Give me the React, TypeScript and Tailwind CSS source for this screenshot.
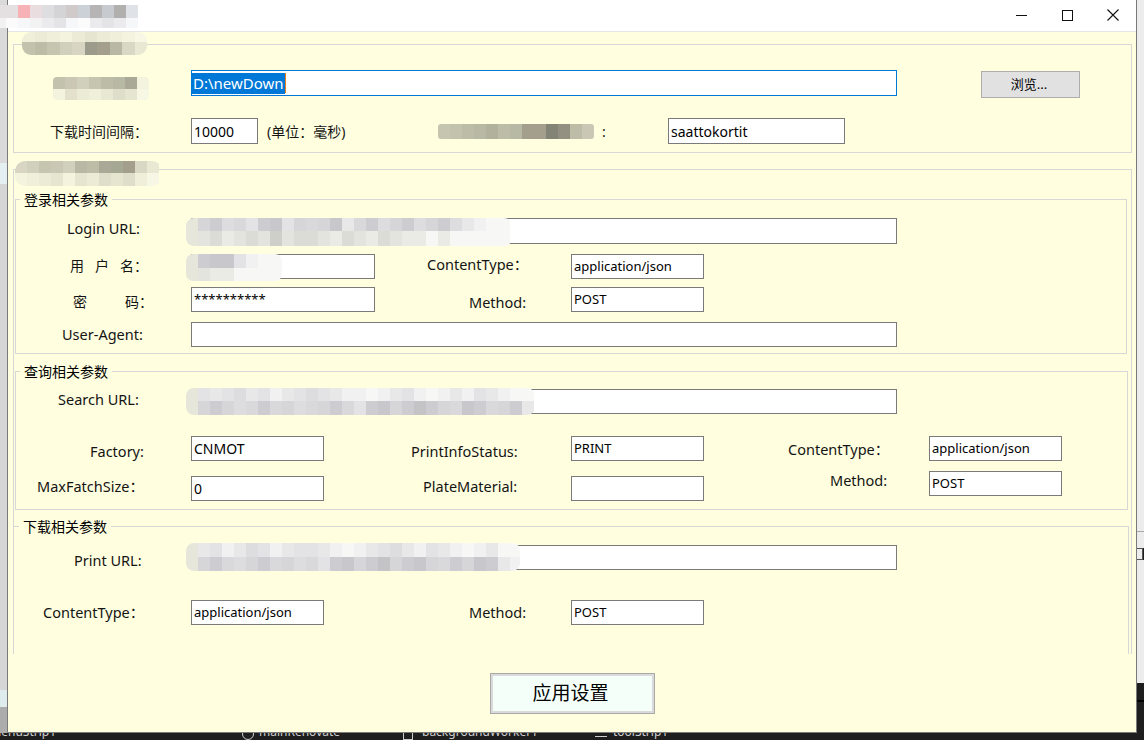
import React from 'react';

function cx(...a: Array<string | false | undefined | null>) {
  return a.filter(Boolean).join(' ');
}

const TB = [
  'bg-[#e4e0e2]', 'bg-[#f7b2b6]', 'bg-[#e9dde0]', 'bg-[#dedee1]', 'bg-[#d4d4d6]', 'bg-[#d0cacb]',
  'bg-[#ccd0d7]', 'bg-[#b6b4b4]', 'bg-[#c7cacf]', 'bg-[#b2afaf]', 'bg-[#dfe2e6]', 'bg-[#f2f2f3]',
  'bg-[#fbfbfb]', 'bg-[#ebebed]', 'bg-[#e4e4e6]', 'bg-[#f6f7f8]',
];

const BG = [
  'bg-[#c3c2ac]', 'bg-[#bdbda7]', 'bg-[#c5c5b0]', 'bg-[#d1d0bd]', 'bg-[#d9d5c3]', 'bg-[#9b9b8b]',
  'bg-[#a49e8c]', 'bg-[#b8b9a4]', 'bg-[#d8d8c4]', 'bg-[#e8e8d3]', 'bg-[#f0f0da]', 'bg-[#ececd6]',
  'bg-[#f3f3de]', 'bg-[#e6e6d0]', 'bg-[#cac8b4]', 'bg-[#aaa997]', 'bg-[#838376]', 'bg-[#939082]',
  'bg-[#b1b19c]', 'bg-[#dedecb]', 'bg-[#f7f7e5]', 'bg-[#e3e1cb]', 'bg-[#b4b4a0]', 'bg-[#a5a893]',
];

const GR = [
  'bg-[#d6d6d9]', 'bg-[#cdcdd1]', 'bg-[#dddddf]', 'bg-[#e3e3e5]', 'bg-[#c8c8cc]', 'bg-[#d9d9db]',
  'bg-[#e8e8e9]', 'bg-[#f1f1f1]', 'bg-[#e4e4df]', 'bg-[#dcdcd7]', 'bg-[#ebebe6]', 'bg-[#cfcfca]',
  'bg-[#f7f7f5]', 'bg-[#e6e6da]', 'bg-[#c4c4c6]', 'bg-[#d2d2cd]',
];

type MP = { pal: string[]; rows: number[][]; cell: string; rowH: string[]; className?: string };

function Mosaic({ pal, rows, cell, rowH, className }: MP) {
  return (
    <div className={cx('flex flex-col overflow-hidden blur-[0.5px]', className)}>
      {rows.map((r, i) => (
        <div key={i} className={cx('flex shrink-0', rowH[i])}>
          {r.map((c, j) => (
            <div key={j} className={cx('shrink-0 h-full', cell, pal[c])} />
          ))}
        </div>
      ))}
    </div>
  );
}

function Label({ className, children, size }: { className: string; children: React.ReactNode; size?: string }) {
  return (
    <div className={cx('shrink-0 flex items-center whitespace-nowrap text-[#141414]', size ?? 'text-[14.5px]', className)}>
      {children}
    </div>
  );
}

function Field({ className, children, text }: { className: string; children?: React.ReactNode; text?: string }) {
  return (
    <div
      className={cx(
        'shrink-0 bg-white border border-[#7a7a7a] flex items-center pl-[2px] whitespace-nowrap text-black overflow-hidden',
        text ?? 'text-[13px]',
        className,
      )}
    >
      {children}
    </div>
  );
}

function Group({ title, titleLeft, className, children }: { title?: string; titleLeft?: string; className: string; children: React.ReactNode }) {
  return (
    <div className={cx('relative shrink-0 border border-[#d7d7d7]', className)}>
      {title && (
        <span className={cx('absolute top-[-10px] px-[4px] bg-[#ffffe0] text-[14px] leading-[20px] text-black whitespace-nowrap', titleLeft ?? 'left-[4px]')}>
          {title}
        </span>
      )}
      {children}
    </div>
  );
}

function TitleBar() {
  return (
    <div className="h-[32px] shrink-0 bg-white border-b border-[#e6e6e6] flex justify-end">
      <div className="w-[46px] h-full flex items-center justify-center pb-[1px]">
        <svg width="11" height="11" viewBox="0 0 11 11" shapeRendering="crispEdges">
          <line x1="0" y1="5.5" x2="11" y2="5.5" stroke="#111" strokeWidth="1" />
        </svg>
      </div>
      <div className="w-[46px] h-full flex items-center justify-center pb-[1px]">
        <svg width="11" height="11" viewBox="0 0 11 11" shapeRendering="crispEdges">
          <rect x="0.5" y="0.5" width="10" height="10" fill="none" stroke="#111" strokeWidth="1" />
        </svg>
      </div>
      <div className="w-[46px] h-full flex items-center justify-center pb-[1px]">
        <svg width="12" height="12" viewBox="0 0 12 12">
          <path d="M0.5 0.5 L11.5 11.5 M11.5 0.5 L0.5 11.5" stroke="#111" strokeWidth="1.1" />
        </svg>
      </div>
    </div>
  );
}

function GroupOne() {
  return (
    <Group className="mt-[12px] h-[109px] w-full">
      <Mosaic
        pal={BG}
        cell="w-[12.5px]"
        rowH={['h-[10px]', 'h-[13px]']}
        rows={[
          [10, 11, 10, 12, 11, 13, 11, 10, 12, 20],
          [0, 1, 2, 3, 4, 5, 6, 7, 8, 9],
        ]}
        className="absolute left-[8px] top-[-13px] rounded-[9px]"
      />
      <div className="flex mt-[25px] h-[26px]">
        <div className="w-[177px] shrink-0">
          <Mosaic
            pal={BG}
            cell="w-[12px]"
            rowH={['h-[12px]', 'h-[11px]']}
            rows={[
              [0, 14, 3, 2, 1, 7, 15, 12],
              [12, 21, 11, 10, 9, 19, 13, 20],
            ]}
            className="ml-[39px] mt-[7px] w-[96px] rounded-[4px]"
          />
        </div>
        <div className="shrink-0 w-[706px] h-[26px] bg-white border border-[#0078d7] flex items-center pl-[0px]">
          <span className="bg-[#0078d7] text-white text-[15px] leading-[21px] pl-[1px] pr-[1px]">D:\newDown</span>
          <span className="w-[1px] h-[20px] bg-[#f07f1a]" />
        </div>
        <button className="shrink-0 ml-[84px] mt-[1px] w-[99px] h-[27px] bg-[#e1e1e1] border border-[#adadad] text-[13px] text-black flex items-center justify-center pr-[3px]">
          浏览...
        </button>
      </div>
      <div className="flex mt-[22px] h-[26px]">
        <Label className="w-[177px] pl-[36px]" size="text-[14px]">下载时间间隔：</Label>
        <Field className="w-[67px] h-[26px]" text="text-[14px]">10000</Field>
        <div className="shrink-0 w-[180px] pl-[9px] flex items-center text-[14px] text-[#141414] whitespace-nowrap">(单位：毫秒)</div>
        <div className="shrink-0 w-[160px] flex items-center">
          <Mosaic
            pal={BG}
            cell="w-[12px]"
            rowH={['h-[15px]']}
            rows={[[2, 0, 1, 7, 18, 1, 7, 6, 6, 16, 17, 1, 14]]}
            className="w-[156px] rounded-[3px]"
          />
        </div>
        <div className="shrink-0 w-[70px] pl-[4px] flex items-center text-[14px] text-[#141414]">:</div>
        <Field className="w-[177px] h-[26px]" text="text-[14px]">saattokortit</Field>
      </div>
    </Group>
  );
}

function LoginGroup() {
  return (
    <Group title="登录相关参数" className="ml-[1px] mt-[29px] w-[1112px] h-[155px]">
      <div className="relative flex mt-[18px] h-[26px]">
        <Label className="w-[175px] pl-[51px] pb-[4px]">Login URL:</Label>
        <Field className="w-[706px] h-[26px]" />
        <Mosaic
          pal={GR}
          cell="w-[12px]"
          rowH={['h-[13px]', 'h-[15px]']}
          rows={[
            [13, 0, 1, 2, 5, 3, 1, 4, 3, 0, 5, 0, 4, 6, 5, 1, 2, 0, 1, 2, 0, 1, 2, 6, 7, 12, 12],
            [13, 8, 9, 10, 8, 9, 8, 11, 8, 9, 9, 8, 10, 9, 8, 10, 9, 8, 10, 10, 12, 10, 12, 12, 12, 12, 12],
          ]}
          className="absolute left-[170px] top-[0px] w-[326px] rounded-[8px]"
        />
      </div>
      <div className="relative flex mt-[10px] h-[25px]">
        <Label className="w-[175px] pl-[54px] pb-[3px]" size="text-[14px]">
          <span className="tracking-[11px]">用户</span>
          <span>名：</span>
        </Label>
        <Field className="w-[184px] h-[25px]" />
        <Mosaic
          pal={GR}
          cell="w-[12px]"
          rowH={['h-[14px]', 'h-[13px]']}
          rows={[
            [13, 1, 4, 4, 3, 7, 12, 12],
            [13, 8, 10, 10, 12, 12, 12, 12],
          ]}
          className="absolute left-[170px] top-[0px] w-[96px] rounded-[7px]"
        />
        <Label className="w-[196px] pl-[52px] pb-[3px]">ContentType：</Label>
        <Field className="w-[133px] h-[25px]">application/json</Field>
      </div>
      <div className="flex mt-[8px] h-[25px]">
        <Label className="w-[175px] pl-[57px] pt-[4px]" size="text-[14px]">
          <span className="mr-[38px]">密</span>
          <span>码：</span>
        </Label>
        <Field className="w-[184px] h-[25px]">**********</Field>
        <Label className="w-[196px] pl-[94px] pt-[6px]">Method:</Label>
        <Field className="w-[133px] h-[25px]">POST</Field>
      </div>
      <div className="flex mt-[10px] h-[25px]">
        <Label className="w-[175px] pl-[46px]">User-Agent:</Label>
        <Field className="w-[706px] h-[25px]" />
      </div>
    </Group>
  );
}

function QueryGroup() {
  return (
    <Group title="查询相关参数" className="ml-[1px] mt-[17px] w-[1113px] h-[139px]">
      <div className="relative flex mt-[17px] h-[25px]">
        <Label className="w-[175px] pl-[42px] pb-[4px]">Search URL:</Label>
        <Field className="w-[706px] h-[25px]" />
        <Mosaic
          pal={GR}
          cell="w-[12px]"
          rowH={['h-[13px]', 'h-[14px]']}
          rows={[
            [13, 3, 6, 3, 2, 6, 3, 7, 6, 3, 2, 3, 6, 7, 7, 12, 7, 6, 3, 7, 12, 7, 6, 7, 3, 6, 7, 12, 12],
            [13, 0, 1, 0, 2, 5, 1, 5, 0, 2, 5, 0, 1, 5, 3, 1, 4, 0, 1, 14, 1, 0, 5, 4, 1, 5, 0, 1, 6],
          ]}
          className="absolute left-[170px] top-[-1px] w-[349px] rounded-[8px]"
        />
      </div>
      <div className="flex mt-[22px] h-[25px]">
        <Label className="w-[175px] pl-[74px] pt-[6px]">Factory:</Label>
        <Field className="w-[133px] h-[25px]" text="text-[14px]">CNMOT</Field>
        <Label className="w-[247px] pl-[87px] pt-[6px]">PrintInfoStatus:</Label>
        <Field className="w-[133px] h-[25px]">PRINT</Field>
        <Label className="w-[225px] pl-[84px] pt-[3px]">ContentType：</Label>
        <Field className="w-[133px] h-[25px]">application/json</Field>
      </div>
      <div className="flex mt-[15px] h-[25px]">
        <Label className="w-[175px] pl-[21px] pb-[3px]">MaxFatchSize：</Label>
        <Field className="w-[133px] h-[25px]" text="text-[14px]">0</Field>
        <Label className="w-[247px] pl-[99px] pb-[3px]">PlateMaterial:</Label>
        <Field className="w-[133px] h-[25px]" />
        <Label className="w-[225px] pl-[126px] pb-[15px]">Method:</Label>
        <Field className="w-[133px] h-[25px] -mt-[5px]">POST</Field>
      </div>
    </Group>
  );
}

function DownloadGroup() {
  return (
    <Group title="下载相关参数" titleLeft="left-[5px]" className="ml-[-1px] mt-[16px] w-[1116px] h-[220px]">
      <div className="relative flex mt-[18px] h-[25px]">
        <Label className="w-[177px] pl-[60px] pt-[6px]">Print URL:</Label>
        <Field className="w-[706px] h-[25px]" />
        <Mosaic
          pal={GR}
          cell="w-[12px]"
          rowH={['h-[14px]', 'h-[14px]']}
          rows={[
            [13, 6, 3, 7, 6, 2, 3, 7, 6, 3, 3, 6, 7, 12, 7, 6, 3, 2, 6, 7, 3, 6, 7, 12, 7, 6, 12, 12],
            [13, 0, 1, 5, 2, 0, 1, 5, 0, 2, 5, 3, 1, 4, 0, 1, 14, 0, 1, 4, 0, 5, 1, 0, 4, 1, 6, 7],
          ]}
          className="absolute left-[172px] top-[-2px] w-[334px] rounded-[8px]"
        />
      </div>
      <div className="flex mt-[30px] h-[25px]">
        <Label className="w-[177px] pl-[29px] pt-[1px]">ContentType：</Label>
        <Field className="w-[133px] h-[25px]">application/json</Field>
        <Label className="w-[247px] pl-[145px] pt-[1px]">Method:</Label>
        <Field className="w-[133px] h-[25px]">POST</Field>
      </div>
    </Group>
  );
}

function GroupTwo() {
  return (
    <div className="relative shrink-0 mt-[16px] h-[485px] w-full border-t border-l border-r border-[#d7d7d7]">
      <div className="h-full w-full overflow-hidden flex flex-col">
        <LoginGroup />
        <QueryGroup />
        <DownloadGroup />
      </div>
      <Mosaic
        pal={BG}
        cell="w-[12px]"
        rowH={['h-[12px]', 'h-[13px]']}
        rows={[
          [4, 3, 2, 14, 3, 7, 1, 15, 23, 6, 8, 9],
          [12, 10, 11, 13, 12, 13, 11, 19, 13, 19, 10, 20],
        ]}
        className="absolute left-[1px] top-[-9px] w-[147px] rounded-[10px]"
      />
    </div>
  );
}

function LeftStrip() {
  return (
    <div className="w-[7px] shrink-0 flex flex-col">
      <div className="h-[163px] bg-[#dadada]" />
      <div className="h-[21px] bg-[#e4eff1]" />
      <div className="h-[506px] bg-[#d6d6d6]" />
      <div className="h-[17px] bg-[#dfecee]" />
      <div className="flex-1 bg-[#acacac]" />
    </div>
  );
}

function RightStrip() {
  return (
    <div className="w-[7px] shrink-0 flex flex-col">
      <div className="h-[531px] bg-[#ececec]" />
      <div className="h-[1px] bg-[#a9a9a9]" />
      <div className="h-[16px] bg-[#ececec]" />
      <div className="h-[12px] bg-[#ececec] border-t border-b border-r border-[#555555] w-[6px]" />
      <div className="h-[123px] bg-[#ececec]" />
      <div className="h-[17px] bg-[#1e1e1e]" />
      <div className="h-[2px] bg-[#000000]" />
      <div className="flex-1 bg-[#1e1e1e]" />
    </div>
  );
}

function BottomStrip() {
  return (
    <div className="h-[7px] shrink-0 bg-[#1e1e1e] overflow-hidden">
      <div className="flex items-start -mt-[9px] h-[16px] text-[12px] leading-[16px] text-[#cfcfcf] whitespace-nowrap">
        <span className="-ml-[10px] w-[252px] shrink-0">menuStrip1</span>
        <span className="shrink-0 w-[13px] h-[16px] flex items-end mr-[4px]">
          <span className="w-[12px] h-[9px] rounded-b-[6px] border border-[#cfcfcf]" />
        </span>
        <span className="shrink-0 w-[144px]">mainRenovate</span>
        <span className="shrink-0 w-[10px] h-[16px] border border-[#cfcfcf] mr-[9px]" />
        <span className="shrink-0 w-[173px]">backgroundWorker1</span>
        <span className="shrink-0 w-[12px] h-[1px] mt-[12px] bg-[#cfcfcf] mr-[6px]" />
        <span className="shrink-0">toolStrip1</span>
      </div>
    </div>
  );
}

export default function App() {
  return (
    <div className="relative w-[1144px] h-[740px] overflow-hidden bg-[#1e1e1e] flex flex-col font-['Noto_Sans','Noto_Sans_CJK_SC',sans-serif]">
      <div className="flex h-[733px] shrink-0">
        <LeftStrip />
        <div className="w-[1130px] h-[733px] shrink-0 flex flex-col border-l border-r border-b border-[#7a7a7a]">
          <TitleBar />
          <div className="flex-1 bg-[#ffffe0] flex flex-col pl-[5px] pr-[4px]">
            <GroupOne />
            <GroupTwo />
            <div className="flex justify-center mt-[19px]">
              <button className="w-[165px] h-[41px] bg-[#f4fffa] border border-[#a9a9a9] shadow-[inset_0_0_0_2px_#dadada] text-[19px] text-black flex items-center justify-center pr-[4px]">
                应用设置
              </button>
            </div>
          </div>
        </div>
        <RightStrip />
      </div>
      <BottomStrip />
      <Mosaic
        pal={TB}
        cell="w-[12px]"
        rowH={['h-[13px]', 'h-[10px]']}
        rows={[
          [0, 0, 1, 2, 3, 4, 5, 6, 7, 8, 9, 10],
          [11, 12, 15, 11, 13, 14, 15, 12, 13, 14, 13, 15],
        ]}
        className="absolute left-[-6px] top-[5px] w-[144px]"
      />
    </div>
  );
}
